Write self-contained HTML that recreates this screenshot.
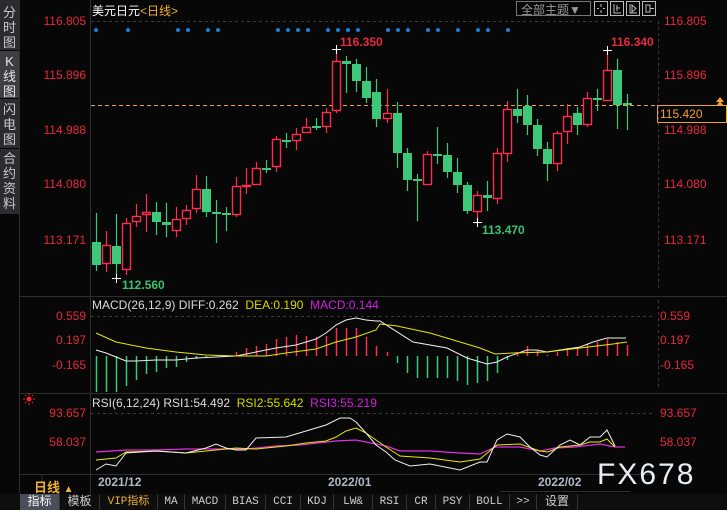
<!DOCTYPE html>
<html><head><meta charset="utf-8">
<style>
*{margin:0;padding:0;box-sizing:border-box}
body{width:727px;height:510px;background:#070707;overflow:hidden;position:relative;font-family:"Liberation Sans","Noto Sans CJK SC",sans-serif}
.a{position:absolute;white-space:nowrap}
.side{position:absolute;left:0;width:19px;background:#2b2c2f;color:#c9c9c9;font-size:13px;line-height:15px;text-align:center}
.r{color:#e8283c;font-size:12px}
.tab{position:absolute;top:494px;height:16px;border-right:1px solid #333;color:#cfcfcf;font-size:11px;line-height:16px;text-align:center;font-family:"Liberation Mono","Noto Sans CJK SC",monospace}
</style></head><body>
<div class="side" style="top:0;height:50px;padding-top:5px">分<br>时<br>图</div>
<div class="side" style="top:51px;height:47px;padding-top:3px;background:#3d3f44;color:#e6e6e6">K<br>线<br>图</div>
<div class="side" style="top:99px;height:49px;padding-top:3px">闪<br>电<br>图</div>
<div class="side" style="top:149px;height:65px;padding-top:2px">合<br>约<br>资<br>料</div>

<svg class="a" style="left:0;top:0" width="727" height="510">
<g stroke="#2e2e2e" stroke-width="1">
<line x1="19.5" y1="0" x2="19.5" y2="494"/>
<line x1="90.5" y1="0" x2="90.5" y2="494"/>
<line x1="20" y1="296.5" x2="727" y2="296.5"/>
<line x1="20" y1="393.5" x2="727" y2="393.5"/>
<line x1="20" y1="474.5" x2="655" y2="474.5"/>
<line x1="500" y1="491.5" x2="630" y2="491.5"/>
</g>
<g stroke="#3a3a3a" stroke-dasharray="3,3">
<line x1="91" y1="21.5" x2="655" y2="21.5"/>
<line x1="91" y1="316.5" x2="655" y2="316.5"/>
<line x1="91" y1="413.5" x2="655" y2="413.5"/>
<line x1="658.5" y1="21" x2="658.5" y2="290"/>
<line x1="658.5" y1="300" x2="658.5" y2="390"/>
</g>
<line x1="91" y1="105.5" x2="657" y2="105.5" stroke="#f0a030" stroke-dasharray="4,3"/>
<g id="cd"></g>
<g id="mb"></g>
<polyline fill="none" stroke="#f0f0f0" stroke-width="1" points="96,350 106,353 116,357 126,361 136,361 156,360 176,360 196,358 216,357 236,356 256,352 276,348 296,345 316,339 326,333 336,325 346,320 356,318 366,320 376,321 380,321 413,342 447,348 467,358 487,364 497,362 507,357 527,350 537,350 547,352 560,350 580,347 593,342 607,338 626,338"/>
<polyline fill="none" stroke="#e8e800" stroke-width="1" points="96,333 116,342 146,348 176,352 206,355 236,356 266,356 286,353 316,349 336,342 356,337 376,330 380,324 397,326 430,333 480,348 495,354 513,353 547,352 580,348 613,344 627,342"/>
<polyline fill="none" stroke="#e030e0" stroke-width="1.2" points="96,452 126,450 156,450 186,449 216,449 246,449 276,446 300,445 336,441 356,440 376,444 386,446 400,451 430,451 460,453 480,454 495,447 520,447 540,451 555,448 575,447 600,444 615,447 625,447"/>
<polyline fill="none" stroke="#e8e800" stroke-width="1" points="96,460 116,458 126,452 156,451 186,453 206,451 236,448 256,449 286,446 306,443 326,441 336,437 346,431 356,428 366,433 376,440 386,447 400,456 430,458 460,462 480,459 497,445 520,444 540,451 548,452 560,447 580,445 590,442 600,442 607,439 615,447"/>
<polyline fill="none" stroke="#f0f0f0" stroke-width="1" points="96,470 106,464 116,466 126,453 156,451 186,453 206,448 216,444 226,448 236,450 246,450 256,438 286,437 306,431 326,425 340,418 350,418 356,422 366,433 376,445 386,452 395,460 410,466 430,464 460,470 480,462 487,462 497,440 507,434 520,437 530,447 540,455 547,457 560,445 570,440 580,445 590,437 600,437 607,430 615,446"/>
<g fill="#1a7fd8" id="dots"></g>
<g stroke="#fff" stroke-width="1">
<line x1="332" y1="49.5" x2="341" y2="49.5"/><line x1="336.5" y1="45" x2="336.5" y2="54"/>
<line x1="603" y1="50.5" x2="612" y2="50.5"/><line x1="607.5" y1="46" x2="607.5" y2="55"/>
<line x1="112" y1="278.5" x2="121" y2="278.5"/><line x1="116.5" y1="274" x2="116.5" y2="283"/>
<line x1="473" y1="222.5" x2="482" y2="222.5"/><line x1="477.5" y1="218" x2="477.5" y2="227"/>
</g>
<rect x="657.5" y="105.5" width="69" height="17" fill="none" stroke="#f0a030"/>
<polygon points="720,97 716,102 724,102" fill="#f0a030"/><polygon points="720,101 716,106 724,106" fill="#f0a030"/>
<circle cx="29" cy="399" r="2.5" fill="#ff2030"/>
<g stroke="#ff2030" stroke-width="1"><line x1="29" y1="393" x2="29" y2="395"/><line x1="29" y1="403" x2="29" y2="405"/><line x1="23" y1="399" x2="25" y2="399"/><line x1="33" y1="399" x2="35" y2="399"/><line x1="25" y1="395" x2="26" y2="396"/><line x1="32" y1="402" x2="33" y2="403"/><line x1="33" y1="395" x2="32" y2="396"/><line x1="25" y1="403" x2="26" y2="402"/></g>
<g fill="none" stroke="#bbb" stroke-width="1">
<rect x="516.5" y="1.5" width="74" height="14" stroke="#777"/>
<rect x="594.5" y="1.5" width="13" height="14"/><rect x="610.5" y="1.5" width="13" height="14"/><rect x="626.5" y="1.5" width="13" height="14"/><rect x="642.5" y="1.5" width="13" height="14"/>
<path d="M601 4v3M601 10v3M597 8.5h2M603 8.5h2"/>
<path d="M614 4v9h7M617 5v6M616 8h4"/>
<path d="M630 4v9h7M632 5l4 3.5-4 3.5z"/>
<path d="M646 4v9M647 5h3v7h-3M650 8.5h4"/>
</g>
<path d="M42 474V492" stroke="#2e2e2e"/>
</svg>

<div class="a" style="left:92px;top:2px;font-size:12px;color:#fff">美元日元<span style="color:#f0b030">&lt;日线&gt;</span></div>
<div class="a" style="left:521px;top:1px;font-size:12px;color:#999">全部主题▼</div>

<div class="a r" style="right:641px;top:14px">116.805</div>
<div class="a r" style="right:641px;top:68px">115.896</div>
<div class="a r" style="right:641px;top:123px">114.988</div>
<div class="a r" style="right:641px;top:177px">114.080</div>
<div class="a r" style="right:641px;top:233px">113.171</div>
<div class="a r" style="left:664px;top:14px">116.805</div>
<div class="a r" style="left:664px;top:68px">115.896</div>
<div class="a r" style="left:664px;top:123px">114.988</div>
<div class="a r" style="left:664px;top:177px">114.080</div>
<div class="a r" style="left:664px;top:233px">113.171</div>
<div class="a" style="left:660px;top:107px;font-size:12px;color:#f0a030">115.420</div>

<div class="a" style="left:340px;top:35px;font-size:12px;font-weight:bold;color:#e8283c">116.350</div>
<div class="a" style="left:611px;top:35px;font-size:12px;font-weight:bold;color:#e8283c">116.340</div>
<div class="a" style="left:122px;top:278px;font-size:12px;font-weight:bold;color:#3cc070">112.560</div>
<div class="a" style="left:482px;top:223px;font-size:12px;font-weight:bold;color:#3cc070">113.470</div>

<div class="a r" style="right:641px;top:309px">0.559</div>
<div class="a r" style="right:641px;top:333px">0.197</div>
<div class="a r" style="right:641px;top:358px">-0.165</div>
<div class="a r" style="left:660px;top:309px">0.559</div>
<div class="a r" style="left:660px;top:333px">0.197</div>
<div class="a r" style="left:660px;top:358px">-0.165</div>
<div class="a" style="left:92px;top:298px;font-size:12px;color:#ddd">MACD(26,12,9) DIFF:0.262 <span style="color:#d8d800">&nbsp;DEA:0.190</span> <span style="color:#d020e0">&nbsp;MACD:0.144</span></div>

<div class="a r" style="right:641px;top:406px">93.657</div>
<div class="a r" style="right:641px;top:435px">58.037</div>
<div class="a r" style="left:660px;top:406px">93.657</div>
<div class="a r" style="left:660px;top:435px">58.037</div>
<div class="a" style="left:92px;top:396px;font-size:12px;color:#ddd">RSI(6,12,24) RSI1:54.492 <span style="color:#d8d800">&nbsp;RSI2:55.642</span> <span style="color:#d020e0">&nbsp;RSI3:55.219</span></div>

<div class="a" style="left:98px;top:475px;font-size:12px;font-weight:bold;color:#b0b8c8">2021/12</div>
<div class="a" style="left:328px;top:475px;font-size:12px;font-weight:bold;color:#b0b8c8">2022/01</div>
<div class="a" style="left:538px;top:475px;font-size:12px;font-weight:bold;color:#b0b8c8">2022/02</div>
<div class="a" style="left:34px;top:477px;font-size:13px;font-weight:bold;color:#f0b030">日线 <span style="font-size:10px">▲</span></div>
<div class="a" style="left:597px;top:458px;font-size:30px;color:#e8eef5;letter-spacing:2px">FX678</div>

<div class="a" style="left:0;top:494px;width:727px;height:16px;background:#0e0e0e"></div>
<div class="tab" style="left:20px;width:40px;background:#4a4e58;color:#fff;font-size:12px">指标</div>
<div class="tab" style="left:60px;width:40px;font-size:12px">模板</div>
<div class="tab" style="left:100px;width:58px;color:#f0b030">VIP指标</div>
<div class="tab" style="left:158px;width:27px">MA</div>
<div class="tab" style="left:185px;width:41px">MACD</div>
<div class="tab" style="left:226px;width:40px">BIAS</div>
<div class="tab" style="left:266px;width:35px">CCI</div>
<div class="tab" style="left:301px;width:33px">KDJ</div>
<div class="tab" style="left:334px;width:39px">LW&amp;</div>
<div class="tab" style="left:373px;width:34px">RSI</div>
<div class="tab" style="left:407px;width:29px">CR</div>
<div class="tab" style="left:436px;width:34px">PSY</div>
<div class="tab" style="left:470px;width:40px">BOLL</div>
<div class="tab" style="left:510px;width:27px">&gt;&gt;</div>
<div class="tab" style="left:537px;width:41px;font-size:12px">设置</div>

<script>
var C=[[96,242,265,213,271,0],[106,245,264,231,272,1],[116,246,264,214,278,0],[126,223,270,218,275,1],[136,216,222,204,227,1],[146,212,215,194,232,1],[156,212,222,202,235,0],[166,222,225,203,237,0],[176,219,231,207,237,1],[186,210,219,205,225,1],[196,189,209,175,213,1],[206,189,212,176,217,0],[216,212,214,200,243,0],[226,213,215,207,231,0],[236,186,215,177,217,1],[246,185,186,168,194,1],[256,168,185,162,185,1],[266,168,169,160,173,0],[276,139,167,136,172,1],[286,140,141,133,148,0],[296,134,141,128,150,1],[306,127,133,118,133,1],[316,126,127,118,130,0],[326,112,127,108,133,1],[336,61,111,49,113,1],[346,61,64,56,93,0],[356,64,81,59,92,0],[366,81,98,67,103,0],[376,92,119,79,127,0],[387,113,119,89,123,1],[397,113,153,102,168,0],[407,153,180,148,191,0],[417,179,181,174,221,0],[427,154,185,151,185,1],[437,154,155,127,164,0],[447,155,172,143,178,0],[457,172,185,158,193,0],[467,185,211,182,214,0],[477,195,212,191,222,1],[487,195,198,181,211,0],[497,153,199,148,204,1],[507,109,154,101,162,1],[517,109,116,89,123,0],[527,106,125,95,135,0],[537,125,149,119,156,0],[547,149,164,142,181,0],[557,133,164,131,171,1],[567,116,132,104,144,1],[577,113,125,107,135,0],[587,98,125,92,127,1],[597,98,99,89,111,0],[607,70,101,50,101,1],[617,70,105,59,129,0],[627,103,105,94,130,0]];
var NS="http://www.w3.org/2000/svg";
function el(g,t,a){var e=document.createElementNS(NS,t);for(var k in a)e.setAttribute(k,a[k]);g.appendChild(e);}
var g=document.getElementById("cd");
C.forEach(function(c){var x=c[0],col=c[5]?"#ff2d4d":"#3cc878";
el(g,"line",{x1:x+.5,x2:x+.5,y1:c[3],y2:c[4],stroke:col,"stroke-width":1.2});
var h=Math.max(c[2]-c[1],2);
if(c[5]){el(g,"rect",{x:x-3.5,y:c[1]+.5,width:8,height:h-1,fill:"#070707",stroke:col,"stroke-width":1.4});}
else el(g,"rect",{x:x-4,y:c[1],width:9,height:h,fill:col});});
var B=[[96,392],[106,392],[116,392],[126,386],[136,380],[146,374],[156,372],[166,368],[176,367],[186,362],[196,359],[206,357],[236,352],[246,348],[256,346],[266,344],[276,339],[286,337],[296,335],[306,336],[316,337],[326,336],[336,328],[346,328],[356,328],[366,337],[376,346],[387,352],[397,363],[407,373],[417,378],[427,378],[437,378],[447,378],[457,381],[467,385],[477,383],[487,381],[497,373],[507,360],[517,352],[527,346],[537,350],[547,355],[557,352],[567,348],[577,347],[587,344],[597,342],[607,339],[617,342],[627,345]];
var m=document.getElementById("mb");
B.forEach(function(b){el(m,"line",{x1:b[0]+.5,x2:b[0]+.5,y1:356,y2:b[1],stroke:b[1]>356?"#3cc878":"#ff2d4d","stroke-width":1.5});});
var d=document.getElementById("dots");
[96,128,178,188,208,218,278,288,298,308,328,338,348,358,388,398,408,428,438,458,478,488,508].forEach(function(x){el(d,"circle",{cx:x,cy:30,r:2});});
</script>
</body></html>
